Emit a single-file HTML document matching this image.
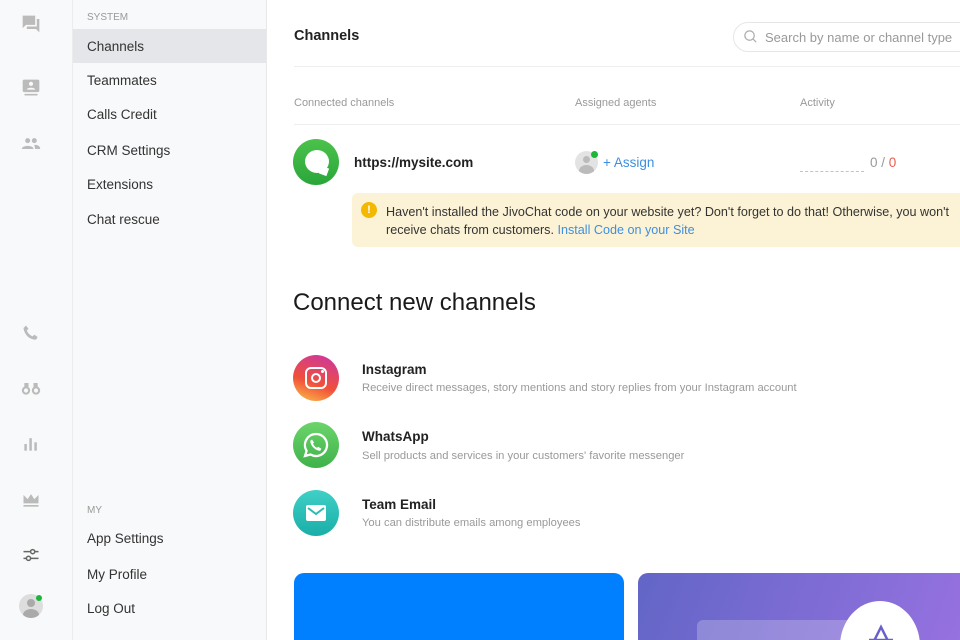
<!DOCTYPE html><html style="overflow:hidden;width:960px;height:640px"><head><style>
*{margin:0;padding:0;box-sizing:border-box}
body{width:960px;height:640px;overflow:hidden;background:#fff;font-family:"Liberation Sans",sans-serif;position:relative;color:#222}
.a{position:absolute}
.rail{left:0;top:0;width:73px;height:640px;background:#f8f9fa;border-right:1px solid #ececec}
.nav{left:73px;top:0;width:194px;height:640px;background:#f8f9fa;border-right:1px solid #e8e8e8}
.ni{position:absolute;left:14px;font-size:13.5px;color:#333;line-height:16px}
.sec{position:absolute;left:14px;font-size:10px;color:#999}
.ic{position:absolute;left:21px;width:20px;height:20px}
.t{white-space:nowrap}
.circ{border-radius:50%;width:46px;height:46px}
.ttl{font-size:13.5px;color:#222;font-weight:bold}
.ds{font-size:11.2px;color:#999}
</style></head><body>
<div class="a rail">
<svg class="ic" style="top:14px" viewBox="0 0 24 24" fill="#bbb"><path d="M2 2h15v11H6l-4 4z"/><path d="M19 6h3v16l-4-4H7v-3h12z"/></svg>
<svg class="ic" style="top:78px" viewBox="0 0 24 24" fill="#bbb"><rect x="2" y="2" width="20" height="15" rx="2"/><rect x="4" y="19" width="16" height="2" rx="1"/><circle cx="12" cy="7" r="2.5" fill="#f8f9fa"/><path d="M7 14c0-3 10-3 10 0z" fill="#f8f9fa"/></svg>
<svg class="ic" style="top:134px" viewBox="0 0 24 24" fill="#bbb"><circle cx="8" cy="8" r="3"/><circle cx="16" cy="8" r="3"/><path d="M1 18c0-5 14-5 14 0z"/><path d="M16 13c4 0 7 1 7 5h-6z"/></svg>
<svg class="ic" style="top:323px" viewBox="0 0 24 24" fill="#bbb"><path d="M6 3l3 4-2 2c1 3 4 6 7 7l2-2 4 3-2 3C10 20 4 14 3 6z"/></svg>
<svg class="ic" style="top:378px" viewBox="0 0 24 24" fill="#bbb"><circle cx="6" cy="15" r="5"/><circle cx="18" cy="15" r="5"/><rect x="4" y="6" width="5" height="8"/><rect x="15" y="6" width="5" height="8"/><circle cx="6" cy="15" r="2.5" fill="#f8f9fa"/><circle cx="18" cy="15" r="2.5" fill="#f8f9fa"/></svg>
<svg class="ic" style="top:434px" viewBox="0 0 24 24" fill="#bbb"><rect x="4" y="12" width="3" height="8"/><rect x="10" y="5" width="3" height="15"/><rect x="16" y="10" width="3" height="10"/></svg>
<svg class="ic" style="top:490px" viewBox="0 0 24 24" fill="#bbb"><path d="M3 6l5 5 4-6 4 6 5-5v10H3z"/><rect x="3" y="18" width="18" height="2"/></svg>
<svg class="ic" style="top:545px" viewBox="0 0 24 24" fill="none" stroke="#666" stroke-width="1.8"><path d="M3 8h18M3 16h18"/><circle cx="14" cy="8" r="2.5" fill="#f8f9fa"/><circle cx="9" cy="16" r="2.5" fill="#f8f9fa"/></svg>
<div class="a" style="left:19px;top:594px;width:24px;height:24px;border-radius:50%;background:#ddd;overflow:hidden"><div class="a" style="left:8px;top:5px;width:8px;height:8px;border-radius:50%;background:#aaa"></div><div class="a" style="left:4px;top:15px;width:16px;height:12px;border-radius:50%;background:#aaa"></div></div>
<div class="a" style="left:36px;top:595px;width:6px;height:6px;border-radius:50%;background:#1db53a"></div>
</div>
<div class="a nav">
<div class="sec" style="top:12px">SYSTEM</div>
<div class="a" style="left:0;top:29px;width:193px;height:34px;background:#e4e6e9"></div>
<div class="ni t" style="top:39px">Channels</div>
<div class="ni t" style="top:73px">Teammates</div>
<div class="ni t" style="top:107px">Calls Credit</div>
<div class="ni t" style="top:143px">CRM Settings</div>
<div class="ni t" style="top:177px">Extensions</div>
<div class="ni t" style="top:212px">Chat rescue</div>
<div class="sec" style="top:505px">MY</div>
<div class="ni t" style="top:531px">App Settings</div>
<div class="ni t" style="top:567px">My Profile</div>
<div class="ni t" style="top:601px">Log Out</div>
</div>
<div class="a t" style="left:294px;top:28px;font-size:14.5px;font-weight:bold;color:#222">Channels</div>
<div class="a" style="left:733px;top:22px;width:260px;height:30px;border:1px solid #e6e6e6;border-radius:15px"></div>
<svg class="a" style="left:743px;top:29px" width="15" height="15" viewBox="0 0 16 16" fill="none" stroke="#aaa" stroke-width="1.3"><circle cx="7" cy="7" r="5"/><path d="M10.5 10.5L14 14"/></svg>
<div class="a t" style="left:765px;top:30px;font-size:13px;color:#999">Search by name or channel type</div>
<div class="a" style="left:294px;top:66px;width:666px;height:1px;background:#eee"></div>
<div class="a t" style="left:294px;top:97px;font-size:11px;color:#999">Connected channels</div>
<div class="a t" style="left:575px;top:97px;font-size:11px;color:#999">Assigned agents</div>
<div class="a t" style="left:800px;top:97px;font-size:11px;color:#999">Activity</div>
<div class="a" style="left:294px;top:124px;width:666px;height:1px;background:#eee"></div>
<div class="a circ" style="left:293px;top:139px;background:linear-gradient(#4cc24c,#2aa63a)"></div>
<div class="a" style="left:305px;top:150px;width:24px;height:23px;border-radius:50%;background:#fff"></div>
<div class="a" style="left:320px;top:167px;width:8px;height:8px;background:#fff;transform:rotate(20deg)"></div>
<div class="a t" style="left:354px;top:155px;font-size:13.5px;font-weight:bold;color:#222">https://mysite.com</div>
<div class="a" style="left:575px;top:151px;width:23px;height:23px;border-radius:50%;background:#e3e3e3;overflow:hidden"><div class="a" style="left:8px;top:5px;width:7px;height:7px;border-radius:50%;background:#bbb"></div><div class="a" style="left:4px;top:14px;width:15px;height:12px;border-radius:50%;background:#bbb"></div></div>
<div class="a" style="left:591px;top:151px;width:7px;height:7px;border-radius:50%;background:#1db53a"></div>
<div class="a t" style="left:603px;top:155px;font-size:13.5px;color:#3d8fe0">+ Assign</div>
<div class="a" style="left:800px;top:171px;width:64px;border-bottom:1px dashed #a9c8ee"></div>
<div class="a t" style="left:870px;top:155px;font-size:13.5px;color:#999">0 / <span style="color:#f05a4a">0</span></div>
<div class="a" style="left:352px;top:193px;width:620px;height:54px;background:#fcf3d6;border-radius:6px"></div>
<div class="a" style="left:361px;top:202px;width:16px;height:16px;border-radius:50%;background:#f5b800;color:#fff;font-size:11px;font-weight:bold;text-align:center;line-height:16px">!</div>
<div class="a t" style="left:386px;top:203px;font-size:12.6px;color:#333;line-height:18px">Haven't installed the JivoChat code on your website yet? Don't forget to do that! Otherwise, you won't<br>receive chats from customers. <span style="color:#3d8fe0">Install Code on your Site</span></div>
<div class="a t" style="left:293px;top:289px;font-size:24px;color:#1a1a1a">Connect new channels</div>
<div class="a circ" style="left:293px;top:355px;background:linear-gradient(20deg,#fcc34a,#f0503a 40%,#c935a8)"></div>
<div class="a" style="left:305px;top:367px;width:22px;height:22px;border:2.5px solid #fff;border-radius:6px"></div>
<div class="a" style="left:311px;top:373px;width:10px;height:10px;border:2.5px solid #fff;border-radius:50%"></div>
<div class="a" style="left:321px;top:370px;width:3px;height:3px;background:#fff;border-radius:50%"></div>
<div class="a t ttl" style="left:362px;top:362px">Instagram</div>
<div class="a t ds" style="left:362px;top:382px">Receive direct messages, story mentions and story replies from your Instagram account</div>
<div class="a circ" style="left:293px;top:422px;background:linear-gradient(#6bd46b,#3fb24a)"></div>
<svg class="a" style="left:302px;top:431px" width="28" height="28" viewBox="0 0 28 28"><path d="M14 3a11 11 0 1 1-5.5 20.5L3 25l1.6-5.2A11 11 0 0 1 14 3z" fill="none" stroke="#fff" stroke-width="2.3"/><path d="M10 8.5l2 3-1 1.3c.8 1.8 2.3 3.3 4 4l1.3-1 3 2-1 2c-5 0-10-5-10-10z" fill="#fff"/></svg>
<div class="a t ttl" style="left:362px;top:429px">WhatsApp</div>
<div class="a t ds" style="left:362px;top:450px">Sell products and services in your customers' favorite messenger</div>
<div class="a circ" style="left:293px;top:490px;background:linear-gradient(#3fd0c6,#1aaea8)"></div>
<svg class="a" style="left:306px;top:505px" width="20" height="16" viewBox="0 0 20 16"><rect width="20" height="16" rx="2" fill="#fff"/><path d="M2 3l8 6 8-6" fill="none" stroke="#2bbdb5" stroke-width="2"/></svg>
<div class="a t ttl" style="left:362px;top:497px">Team Email</div>
<div class="a t ds" style="left:362px;top:517px">You can distribute emails among employees</div>
<div class="a" style="left:294px;top:573px;width:330px;height:67px;background:#007fff;border-radius:10px 10px 0 0"></div>
<div class="a" style="left:638px;top:573px;width:322px;height:67px;background:linear-gradient(110deg,#6266c6,#9671e0);border-radius:10px 0 0 0;overflow:hidden">
<div class="a" style="left:59px;top:47px;width:200px;height:60px;background:rgba(255,255,255,.22);border-radius:6px"></div>
<div class="a" style="left:202px;top:28px;width:80px;height:90px;border-radius:50%;background:#fff"></div>
<svg class="a" style="left:228px;top:50px" width="30" height="20" viewBox="0 0 30 20" fill="none" stroke="#6a60cc" stroke-width="2.5"><path d="M8 18L15 4l7 14M3 17h24"/></svg>
</div>
</body></html>
